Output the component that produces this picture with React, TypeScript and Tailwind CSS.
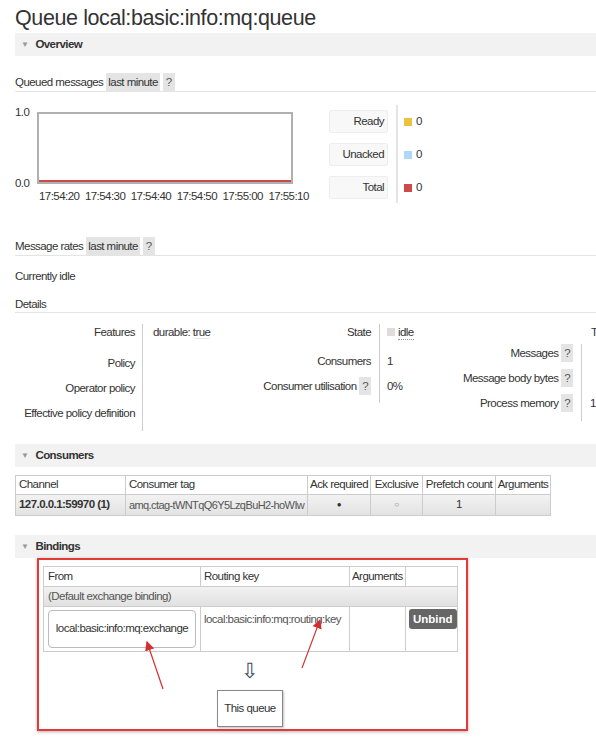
import React from "react"

const font = { fontFamily: '"Liberation Sans", Arial, sans-serif' }

function SectionHeader({ title }: { title: string }) {
  return (
    <div className="ml-[15px] h-[23px] bg-[#f2f2f2] flex items-center pl-[6px]">
      <span className="text-[8px] text-[#999] mr-[7px]">▼</span>
      <span className="font-bold text-[#333]">{title}</span>
    </div>
  )
}

function Help() {
  return <span className="inline-block bg-[#e4e4e4] px-[3px] leading-[18px] text-[#555]">?</span>
}

function RangeRow({ label }: { label: string }) {
  return (
    <div className="ml-[15px] flex items-end gap-[3px] border-b border-[#e4e4e4] h-[18px]">
      <span className="leading-[18px]">{label}</span>
      <span className="bg-[#e4e4e4] px-[2px] leading-[18px]">last minute</span>
      <Help />
    </div>
  )
}

const legend = [
  { label: "Ready", color: "bg-[#edc240]" },
  { label: "Unacked", color: "bg-[#afd8f8]" },
  { label: "Total", color: "bg-[#cb4b4b]" },
]

const times = ["17:54:20", "17:54:30", "17:54:40", "17:54:50", "17:55:00", "17:55:10"]

export default function App() {
  return (
    <div
      className="relative w-[596px] h-[749px] overflow-hidden bg-white text-[11.5px] tracking-[-0.55px] whitespace-nowrap text-[#333]"
      style={font}
    >
      <h1 className="pl-[15px] pt-[5px] h-[33px] text-[21.5px] tracking-[-0.4px] leading-[26px] text-[#333] font-normal">
        Queue local:basic:info:mq:queue
      </h1>
      <SectionHeader title="Overview" />

      <div className="mt-[18px]">
        <RangeRow label="Queued messages" />
      </div>

      {/* chart + legend */}
      <div className="flex mt-[13px] h-[98px]">
        <div className="ml-[15px] w-[22px] flex flex-col justify-between pt-[1px] h-[84px]">
          <span className="leading-[12px]">1.0</span>
          <span className="leading-[12px]">0.0</span>
        </div>
        <div className="w-[256px] flex flex-col pt-[7px]">
          <div className="w-[256px] h-[72px] border-2 border-[#b0b0b0] flex items-end">
            <div className="w-full h-[2px] bg-[#cb4b4b]" />
          </div>
          <div className="flex gap-[5.5px] pl-[2px] pt-[6px] leading-[12px]">
            {times.map((t) => (
              <span key={t}>{t}</span>
            ))}
          </div>
        </div>
        <div className="ml-[36px] flex flex-col gap-[10px] pt-[5px]">
          {legend.map((l) => (
            <div key={l.label} className="w-[59px] h-[23px] bg-[#f8f8f8] border border-[#eee] rounded-[2px] text-right pr-[3px] leading-[21px]">
              {l.label}
            </div>
          ))}
        </div>
        <div className="ml-[8px] border-l-2 border-[#e4e4e4] h-[98px] pl-[6px] flex flex-col gap-[10px] pt-[5px]">
          {legend.map((l) => (
            <div key={l.label} className="h-[23px] flex items-center gap-[4px]">
              <span className={`w-[8px] h-[8px] ${l.color}`} />
              <span>0</span>
            </div>
          ))}
        </div>
      </div>

      <div className="mt-[35px]">
        <RangeRow label="Message rates" />
      </div>
      <div className="ml-[15px] mt-[13px] leading-[14px]">Currently idle</div>
      <div className="ml-[15px] mt-[13px] border-b border-[#e4e4e4] leading-[16px] h-[17px]">Details</div>

      {/* details */}
      <div className="flex mt-[11px] ml-[15px]">
        <div className="flex">
          <div className="w-[128px] border-r border-[#ccc] text-right pr-[7px]">
            <div className="h-[31px] leading-[16px]">Features</div>
            <div className="h-[25px] leading-[16px]">Policy</div>
            <div className="h-[25px] leading-[16px]">Operator policy</div>
            <div className="h-[26px] leading-[16px]">Effective policy definition</div>
          </div>
          <div className="w-[108px] pl-[10px] leading-[16px]">
            durable: <span className="border-b border-[#e4e4e4] rounded-[3px]">true</span>
          </div>
        </div>
        <div className="flex self-start">
          <div className="w-[129px] border-r border-[#ccc] text-right pr-[8px]">
            <div className="h-[29px] leading-[16px]">State</div>
            <div className="h-[25px] leading-[16px]">Consumers</div>
            <div className="h-[25px] leading-[18px] -mt-[1px]">
              Consumer utilisation <Help />
            </div>
          </div>
          <div className="w-[76px] pl-[7px]">
            <div className="h-[29px]">
              <div className="h-[16px] flex items-center gap-[3px]">
                <span className="w-[8px] h-[8px] bg-[#ddd]" />
                <span className="border-b border-dotted border-[#999] leading-[14px]">idle</span>
              </div>
            </div>
            <div className="h-[25px] leading-[16px]">1</div>
            <div className="h-[25px] leading-[16px]">0%</div>
          </div>
        </div>
        <div className="self-start">
          <div className="flex h-[20px]">
            <div className="w-[126px]" />
            <div className="pl-[9px] leading-[16px]">Total</div>
          </div>
          <div className="flex">
            <div className="w-[126px] border-r border-[#ccc] text-right pr-[8px]">
              <div className="h-[25px] leading-[18px]">
                Messages <Help />
              </div>
              <div className="h-[25px] leading-[18px]">
                Message body bytes <Help />
              </div>
              <div className="h-[27px] leading-[18px]">
                Process memory <Help />
              </div>
            </div>
            <div className="pl-[8px]">
              <div className="h-[25px]" />
              <div className="h-[25px]" />
              <div className="h-[27px] leading-[18px]">18.3 KiB</div>
            </div>
          </div>
        </div>
      </div>

      <div className="mt-[13px]">
        <SectionHeader title="Consumers" />
      </div>

      <table className="ml-[15px] mt-[8px] w-[535px] table-fixed border-collapse">
        <thead>
          <tr className="h-[19px]">
            <th className="w-[110px] border border-[#ccc] font-normal text-left px-[3px]">Channel</th>
            <th className="w-[182px] border border-[#ccc] font-normal text-left px-[3px]">Consumer tag</th>
            <th className="w-[63px] border border-[#ccc] font-normal px-0">Ack required</th>
            <th className="w-[52px] border border-[#ccc] font-normal px-0">Exclusive</th>
            <th className="w-[73px] border border-[#ccc] font-normal px-0">Prefetch count</th>
            <th className="w-[55px] border border-[#ccc] font-normal px-0">Arguments</th>
          </tr>
        </thead>
        <tbody>
          <tr className="h-[21px] bg-gradient-to-b from-[#f2f2f2] to-[#e2e2e2]">
            <td className="border border-[#ccc] font-bold px-[3px]">127.0.0.1:59970 (1)</td>
            <td className="border border-[#ccc] pl-[3px] pr-0 text-[#555] text-[11px] tracking-[-0.6px]">
              amq.ctag-tWNTqQ6Y5LzqBuH2-hoWIw
            </td>
            <td className="border border-[#ccc] text-center text-[8px]">●</td>
            <td className="border border-[#ccc] text-center text-[8px] text-[#777]">○</td>
            <td className="border border-[#ccc] text-center">1</td>
            <td className="border border-[#ccc]" />
          </tr>
        </tbody>
      </table>

      <div className="mt-[19px]">
        <SectionHeader title="Bindings" />
      </div>

      <div className="ml-[37px] w-[431px] h-[173px] border-2 border-[#e53935] shadow-[0_1px_3px_rgba(0,0,0,0.3)] pt-[6px] pl-[4px]">
        <table className="w-[414px] table-fixed border-collapse">
          <thead>
            <tr className="h-[20px]">
              <th className="w-[157px] border border-[#ccc] font-normal text-left px-[4px]">From</th>
              <th className="w-[149px] border border-[#ccc] font-normal text-left px-[3px]">Routing key</th>
              <th className="w-[56px] border border-[#ccc] font-normal text-left px-[2px]">Arguments</th>
              <th className="w-[52px] border border-[#ccc]" />
            </tr>
          </thead>
          <tbody>
            <tr className="h-[20px] bg-gradient-to-b from-[#f2f2f2] to-[#e0e0e0]">
              <td colSpan={4} className="border border-[#ccc] px-[4px] text-[#555]">
                (Default exchange binding)
              </td>
            </tr>
            <tr className="h-[45px]">
              <td className="border border-[#ccc] px-[4px] py-[2px]">
                <div className="h-[38px] border border-[#bbb] rounded-[4px] flex items-center justify-center">
                  local:basic:info:mq:exchange
                </div>
              </td>
              <td className="border border-[#ccc] align-top px-[3px] pt-[4px] text-[#555]">
                local:basic:info:mq:routing:key
              </td>
              <td className="border border-[#ccc]" />
              <td className="border border-[#ccc] align-top pt-[2px] px-[3px]">
                <span className="inline-block bg-[#666] text-white font-bold rounded-[3px] px-[4px] leading-[20px] tracking-[0px]">
                  Unbind
                </span>
              </td>
            </tr>
          </tbody>
        </table>
        <div className="flex flex-col items-center w-[414px]">
          <span className="mt-[7px] text-[21px] leading-[24px] text-[#446]">⇩</span>
          <div className="mt-[7px] w-[66px] h-[37px] border border-[#888] shadow-[1px_1px_2px_rgba(0,0,0,0.25)] flex items-center justify-center">
            This queue
          </div>
        </div>
      </div>

      {/* annotation arrows */}
      <svg className="absolute left-0 top-0 pointer-events-none" width="596" height="749">
        <defs>
          <marker id="ah" markerWidth="8" markerHeight="8" refX="7" refY="4" orient="auto">
            <path d="M0,0 L8,4 L0,8 Z" fill="#d32f2f" />
          </marker>
        </defs>
        <line x1="163" y1="689" x2="147" y2="642" stroke="#d32f2f" strokeWidth="1.2" markerEnd="url(#ah)" />
        <line x1="302" y1="668" x2="320" y2="620" stroke="#d32f2f" strokeWidth="1.2" markerEnd="url(#ah)" />
      </svg>
    </div>
  )
}
